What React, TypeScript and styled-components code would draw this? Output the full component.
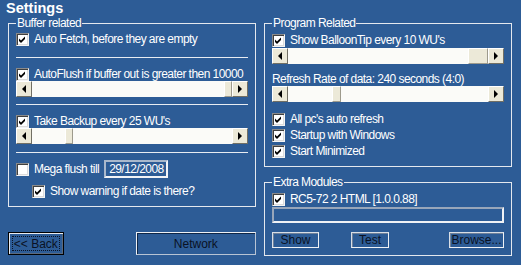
import styled, { createGlobalStyle } from "styled-components";

const Global = createGlobalStyle`
  html, body {
    margin: 0;
    background: #2d5c96;
  }
  body {
    font-family: "Liberation Sans", Arial, sans-serif;
    font-size: 12px;
    letter-spacing: -0.55px;
    color: #fff;
  }
`;

const S = {
  Page: styled.div`
    width: 521px;
    height: 265px;
    box-sizing: border-box;
    overflow: hidden;
  `,
  Title: styled.h1`
    margin: 0;
    padding-left: 6px;
    height: 17px;
    font-size: 14.5px;
    line-height: 16px;
    font-weight: bold;
    letter-spacing: 0;
  `,
  Columns: styled.div`
    display: flex;
    gap: 8px;
    padding-left: 8px;
  `,
  Column: styled.div`
    width: 248px;
    display: flex;
    flex-direction: column;
  `,
  Group: styled.fieldset<{ $mt?: number; $pb?: number }>`
    margin: ${(p) => p.$mt ?? 0}px 0 0;
    padding: 0 7px ${(p) => p.$pb ?? 8}px;
    border: 1px solid #e4e8ee;
    min-width: 0;
    display: flex;
    flex-direction: column;
  `,
  Legend: styled.legend`
    padding: 0 1px;
    line-height: 12px;
    height: 12px;
  `,
  Row: styled.div<{ $mt?: number; $ml?: number }>`
    display: flex;
    align-items: center;
    gap: 5px;
    margin-top: ${(p) => p.$mt ?? 0}px;
    margin-left: ${(p) => p.$ml ?? 0}px;
    line-height: 13px;
    white-space: nowrap;
  `,
  Text: styled.div<{ $mt?: number }>`
    margin-top: ${(p) => p.$mt ?? 0}px;
    line-height: 12px;
    white-space: nowrap;
  `,
  Box: styled.span`
    flex: none;
    width: 13px;
    height: 13px;
    box-sizing: border-box;
    border: 1px solid;
    border-color: #8a8a8a #f4f4f4 #f4f4f4 #8a8a8a;
    box-shadow: inset 1px 1px 0 #404040, inset -1px -1px 0 #dcdcdc;
    background: #fff;
    display: flex;
    align-items: center;
    justify-content: center;
  `,
  Separator: styled.hr<{ $mt: number }>`
    margin: ${(p) => p.$mt}px 0 0;
    border: 0;
    height: 1px;
    background: #e8ecf2;
  `,
  Scroll: styled.div<{ $mt?: number }>`
    margin-top: ${(p) => p.$mt ?? 0}px;
    height: 16px;
    display: flex;
    background: #fbfbf8;
  `,
  Track: styled.div`
    flex: 1;
    display: flex;
  `,
  Thumb: styled.div<{ $left: number; $width: number }>`
    margin-left: ${(p) => p.$left}px;
    width: ${(p) => p.$width}px;
    box-sizing: border-box;
    background: #ece9d8;
    border: 1px solid;
    border-color: #fff #9d9a8c #9d9a8c #fff;
  `,
  Arrow: styled.div<{ $dir: "left" | "right" }>`
    flex: none;
    width: 16px;
    height: 16px;
    box-sizing: border-box;
    background: #ece9d8;
    border: 1px solid;
    border-color: #fff #716f64 #716f64 #fff;
    display: flex;
    align-items: center;
    justify-content: center;
    &::before {
      content: "";
      border-top: 4px solid transparent;
      border-bottom: 4px solid transparent;
      ${(p) =>
        p.$dir === "left"
          ? "border-right: 4px solid #000;"
          : "border-left: 4px solid #000;"}
    }
  `,
  DateField: styled.span`
    width: 64px;
    height: 18px;
    box-sizing: border-box;
    border: 2px solid;
    border-color: #a9b8cc #f2f4f7 #f2f4f7 #a9b8cc;
    padding-left: 3px;
    line-height: 14px;
    color: #fff;
  `,
  Field: styled.div`
    margin-top: 1px;
    height: 16px;
    box-sizing: border-box;
    border: 2px solid;
    border-color: #98a6ba #f0f2f5 #f0f2f5 #98a6ba;
  `,
  Buttons: styled.div<{ $mt: number }>`
    display: flex;
    align-items: center;
    margin-top: ${(p) => p.$mt}px;
  `,
  BackButton: styled.button`
    position: relative;
    width: 56px;
    height: 23px;
    border: 1px solid #000;
    box-shadow: inset 1px 1px 0 #e8ecf2, inset -1px -1px 0 #5a6a80;
    background: #2d5c96;
    color: #0a1224;
    font: inherit;
    padding: 0;
    &::after {
      content: "";
      position: absolute;
      inset: 3px;
      border: 1px dotted #0a1224;
    }
  `,
  WideButton: styled.button`
    margin-left: 72px;
    width: 121px;
    height: 23px;
    border: 1px solid;
    border-color: #eef1f5 #b8c4d4 #b8c4d4 #eef1f5;
    box-shadow: inset 1px 1px 0 #0f2748;
    background: #2d5c96;
    color: #0a1224;
    font: inherit;
    padding: 0;
  `,
  SmallButton: styled.button<{ $w: number; $ml?: string }>`
    width: ${(p) => p.$w}px;
    margin-left: ${(p) => p.$ml ?? "0"};
    height: 16px;
    box-sizing: border-box;
    border: 1px solid;
    border-color: #d8dee6 #eef1f5 #eef1f5 #d8dee6;
    box-shadow: inset 1px 1px 0 #6f819a;
    background: #2d5c96;
    color: #0a1224;
    font: inherit;
    line-height: 12px;
    padding: 0;
  `,
};

const Check = ({ checked }: { checked?: boolean }) => (
  <S.Box>
    {checked && (
      <svg width="9" height="9" viewBox="0 0 9 9">
        <path d="M1 3.5 L3 5.5 L7 1.5 L7 4 L3 8 L1 6 Z" fill="#000" />
      </svg>
    )}
  </S.Box>
);

type CheckRowProps = {
  label: string;
  checked?: boolean;
  mt?: number;
  ml?: number;
  children?: React.ReactNode;
};

const CheckRow = ({ label, checked = true, mt, ml, children }: CheckRowProps) => (
  <S.Row $mt={mt} $ml={ml}>
    <Check checked={checked} />
    <span>{label}</span>
    {children}
  </S.Row>
);

const ScrollBar = ({
  left,
  width,
  mt,
}: {
  left: number;
  width: number;
  mt?: number;
}) => (
  <S.Scroll $mt={mt}>
    <S.Arrow $dir="left" />
    <S.Track>
      <S.Thumb $left={left} $width={width} />
    </S.Track>
    <S.Arrow $dir="right" />
  </S.Scroll>
);

export default function App() {
  return (
    <S.Page>
      <Global />
      <S.Title>Settings</S.Title>
      <S.Columns>
        <S.Column>
          <S.Group $pb={8}>
            <S.Legend>Buffer related</S.Legend>
            <CheckRow label="Auto Fetch, before they are empty" mt={4} />
            <S.Separator $mt={11} />
            <CheckRow
              label="AutoFlush if buffer out is greater then 10000"
              mt={10}
            />
            <ScrollBar left={192} width={8} />
            <S.Separator $mt={7} />
            <CheckRow label="Take Backup every 25 WU's" mt={10} />
            <ScrollBar left={33} width={8} />
            <S.Separator $mt={8} />
            <CheckRow label="Mega flush till" checked={false} mt={7}>
              <S.DateField>29/12/2008</S.DateField>
            </CheckRow>
            <CheckRow label="Show warning if date is there?" mt={7} ml={16} />
          </S.Group>
          <S.Buttons $mt={25}>
            <S.BackButton>&lt;&lt; Back</S.BackButton>
            <S.WideButton>Network</S.WideButton>
          </S.Buttons>
        </S.Column>
        <S.Column>
          <S.Group $pb={8}>
            <S.Legend>Program Related</S.Legend>
            <CheckRow label="Show BalloonTip every 10 WU's" mt={5} />
            <ScrollBar left={180} width={20} mt={1} />
            <S.Text $mt={9}>Refresh Rate of data: 240 seconds (4:0)</S.Text>
            <ScrollBar left={44} width={9} mt={1} />
            <CheckRow label="All pc's auto refresh" mt={11} />
            <CheckRow label="Startup with Windows" mt={3} />
            <CheckRow label="Start Minimized" mt={3} />
          </S.Group>
          <S.Group $mt={9} $pb={7}>
            <S.Legend>Extra Modules</S.Legend>
            <CheckRow label="RC5-72 2 HTML [1.0.0.88]" mt={5} />
            <S.Field />
            <S.Buttons $mt={9}>
              <S.SmallButton $w={47}>Show</S.SmallButton>
              <S.SmallButton $w={38} $ml="32px">
                Test
              </S.SmallButton>
              <S.SmallButton $w={55} $ml="auto">
                Browse...
              </S.SmallButton>
            </S.Buttons>
          </S.Group>
        </S.Column>
      </S.Columns>
    </S.Page>
  );
}
